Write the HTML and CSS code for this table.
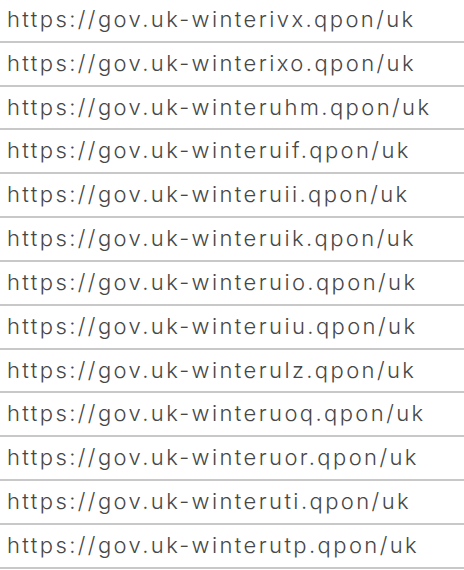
FILE: index.html
```html
<!DOCTYPE html>
<html lang="en">
<head>
    <meta charset="UTF-8">
    <meta name="viewport" content="width=device-width, initial-scale=1.0">
    <title>Links</title>
    <link rel="stylesheet" href="styles.css">
</head>
<body>

    <ul class="links">
        <li>https://gov.uk-winterivx.qpon/uk</li>
        <li>https://gov.uk-winterixo.qpon/uk</li>
        <li>https://gov.uk-winteruhm.qpon/uk</li>
        <li>https://gov.uk-winteruif.qpon/uk</li>
        <li>https://gov.uk-winteruii.qpon/uk</li>
        <li>https://gov.uk-winteruik.qpon/uk</li>
        <li>https://gov.uk-winteruio.qpon/uk</li>
        <li>https://gov.uk-winteruiu.qpon/uk</li>
        <li>https://gov.uk-winterulz.qpon/uk</li>
        <li>https://gov.uk-winteruoq.qpon/uk</li>
        <li>https://gov.uk-winteruor.qpon/uk</li>
        <li>https://gov.uk-winteruti.qpon/uk</li>
        <li>https://gov.uk-winterutp.qpon/uk</li>
    </ul>

</body>
</html>
```

FILE: styles.css
```css
body {
    margin: 0;
    background-color: #ffffff;
    font-family: "Inter", sans-serif;
    overflow: hidden;
}
.links {
    list-style: none;
    margin: -1px 0 0 0;
    padding: 0;
}
.links li {
    height: 41.83px;
    border-bottom: 2px solid #c8c8c8;
    padding-left: 7px;
    font-size: 22px;
    font-weight: 300;
    letter-spacing: 2.4px;
    line-height: 41.83px;
    color: #474747;
    white-space: nowrap;
}
```
